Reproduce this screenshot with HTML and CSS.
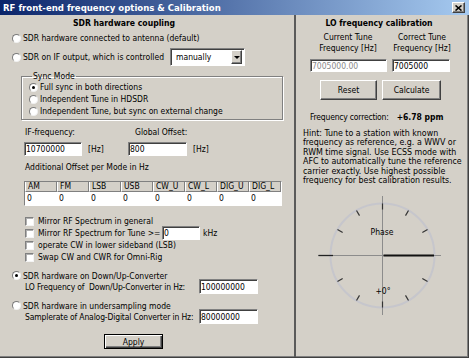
FILE: index.html
```html
<!DOCTYPE html>
<html lang="en">
<head>
  <meta charset="UTF-8">
  <meta name="viewport" content="width=device-width, initial-scale=1.0">
  <title>RF front-end frequency options &amp; Calibration</title>
  <link rel="stylesheet" href="styles.css">
</head>
<body>
  <div class="window">
    <div class="titlebar">
      <span class="caption">RF front-end frequency options &amp; Calibration</span>
      <span class="close-btn">
        <svg width="7" height="6" viewBox="0 0 7 6"><path d="M0.5 0.5 L6.5 5.5 M6.5 0.5 L0.5 5.5" stroke="#000" stroke-width="1.6"/></svg>
      </span>
    </div>

    <div class="panes">
      <div class="left">
        <div class="heading">SDR hardware coupling</div>

        <div class="row opt first"><span class="radio"></span>SDR hardware connected to antenna (default)</div>
        <div class="row opt combo-row">
          <span class="radio"></span>
          <span class="combo-label">SDR on IF output, which is controlled</span>
          <span class="combo"><span class="combo-text">manually</span><span class="combo-btn"></span></span>
        </div>

        <fieldset class="group">
          <legend>Sync Mode</legend>
          <div class="row"><span class="radio checked"></span>Full sync in both directions</div>
          <div class="row"><span class="radio"></span>Independent Tune in HDSDR</div>
          <div class="row"><span class="radio"></span>Independent Tune, but sync on external change</div>
        </fieldset>

        <div class="row if-labels">
          <span class="if-col">IF-frequency:</span>
          <span>Global Offset:</span>
        </div>
        <div class="row if-inputs">
          <span class="if-group"><input class="field w58" type="text" value="10700000"><span class="unit">[Hz]</span></span>
          <span class="if-group"><input class="field w59" type="text" value="800"><span class="unit">[Hz]</span></span>
        </div>

        <div class="row note">Additional Offset per Mode in Hz</div>

        <div class="modes">
          <div class="hd">AM</div><div class="hd">FM</div><div class="hd">LSB</div><div class="hd">USB</div>
          <div class="hd">CW_U</div><div class="hd">CW_L</div><div class="hd">DIG_U</div><div class="hd">DIG_L</div>
          <div class="val">0</div><div class="val">0</div><div class="val">0</div><div class="val">0</div>
          <div class="val">0</div><div class="val">0</div><div class="val">0</div><div class="val">0</div>
        </div>

        <div class="checks">
          <div class="row"><span class="check"></span>Mirror RF Spectrum in general</div>
          <div class="row"><span class="check"></span><span class="tune-label">Mirror RF Spectrum for Tune &gt;=</span><input class="field tune" type="text" value="0"><span class="khz">kHz</span></div>
          <div class="row"><span class="check"></span>operate CW in lower sideband (LSB)</div>
          <div class="row"><span class="check"></span>Swap CW and CWR for Omni-Rig</div>
        </div>

        <div class="row opt conv"><span class="radio checked"></span>SDR hardware on Down/Up-Converter</div>
        <div class="row sub-field"><span class="sub-label">LO Frequency of &nbsp;Down/Up-Converter in Hz:</span><input class="field w59 tall" type="text" value="100000000"></div>

        <div class="row opt under"><span class="radio"></span>SDR hardware in undersampling mode</div>
        <div class="row sub-field"><span class="sub-label">Samplerate of Analog-Digital Converter in Hz:</span><input class="field w59 tall" type="text" value="80000000"></div>

        <button class="btn default apply">Apply</button>
      </div>

      <div class="right">
        <div class="heading">LO frequency calibration</div>

        <div class="cal-grid">
          <div class="cal-label">Current Tune<br>Frequency [Hz]</div>
          <div class="cal-label">Correct Tune<br>Frequency [Hz]</div>
          <div class="cal-input"><input class="field current" type="text" value="7005000.00" readonly></div>
          <div class="cal-input"><input class="field correct" type="text" value="7005000"></div>
        </div>

        <div class="cal-buttons">
          <button class="btn reset">Reset</button>
          <button class="btn calc">Calculate</button>
        </div>

        <div class="row correction">Frequency correction:<b>+6.78 ppm</b></div>

        <p class="hint">Hint: Tune to a station with known<br>frequency as reference, e.g. a WWV or<br>RWM time signal. Use ECSS mode with<br>AFC to automatically tune the reference<br>carrier exactly. Use highest possible<br>frequency for best calibration results.</p>

        <svg class="dial" width="130" height="125" viewBox="0 0 130 125">
          <circle cx="65.5" cy="60.5" r="52" fill="none" stroke="#c6c6cc" stroke-width="2"/>
          <line x1="65.5" y1="1" x2="65.5" y2="120" stroke="#8c8c8c"/>
          <line x1="1" y1="60.5" x2="124" y2="60.5" stroke="#8c8c8c"/>
          <line x1="1.5" y1="60.5" x2="16" y2="60.5" stroke="#222" stroke-width="1.3"/>
          <line x1="66.5" y1="60.5" x2="117" y2="60.5" stroke="#111" stroke-width="2"/>
          <g stroke="#333" stroke-width="1.2">
            <line x1="65.5" y1="14.5" x2="65.5" y2="8.5"/>
            <line x1="88.5" y1="20.66" x2="91.5" y2="15.47"/>
            <line x1="42.5" y1="20.66" x2="39.5" y2="15.47"/>
            <line x1="105.34" y1="37.5" x2="110.53" y2="34.5"/>
            <line x1="25.66" y1="37.5" x2="20.47" y2="34.5"/>
            <line x1="105.34" y1="83.5" x2="110.53" y2="86.5"/>
            <line x1="25.66" y1="83.5" x2="20.47" y2="86.5"/>
            <line x1="88.5" y1="100.34" x2="91.5" y2="105.53"/>
            <line x1="42.5" y1="100.34" x2="39.5" y2="105.53"/>
            <line x1="65.5" y1="106.5" x2="65.5" y2="112.5"/>
          </g>
          <text x="65" y="40" text-anchor="middle">Phase</text>
          <text x="66" y="99" text-anchor="middle">+0°</text>
        </svg>
      </div>
    </div>
  </div>
</body>
</html>
```

FILE: styles.css
```css
* {
  box-sizing: border-box;
}
body {
  margin: 0;
  background: #d4d0c8;
  font-family: "DejaVu Sans Condensed", "Liberation Sans", sans-serif;
  font-size: 8.5px;
  color: #000;
}
input, button {
  font: inherit;
  color: inherit;
  margin: 0;
}

.window {
  width: 469px;
  height: 358px;
  display: flex;
  flex-direction: column;
  background: #d4d0c8;
}
.titlebar {
  flex: none;
  height: 15px;
  display: flex;
  align-items: center;
  padding: 0 4px 0 3px;
  background: linear-gradient(to right, #0a246a, #a6caf0);
  color: #fff;
  font-weight: bold;
  font-size: 9.5px;
}
.caption {
  flex: 1;
}
.close-btn {
  width: 13px;
  height: 11px;
  display: flex;
  align-items: center;
  justify-content: center;
  background: #d4d0c8;
  border: 1px solid;
  border-color: #fff #404040 #404040 #fff;
  box-shadow: inset -1px -1px 0 #808080;
}

.panes {
  flex: 1;
  display: flex;
  border-right: 1px solid #404040;
  border-bottom: 1px solid #404040;
  box-shadow: inset -1px -1px 0 #808080;
}
.left {
  width: 296px;
  flex: none;
  padding-top: 2px;
  border-right: 2px solid #5a5a5a;
}
.right {
  flex: 1;
  padding-top: 2px;
}

.heading {
  height: 12px;
  line-height: 12px;
  font-size: 8.6px;
  font-weight: bold;
  text-align: center;
}
.left .heading {
  padding-right: 46px;
}
.right .heading {
  padding-right: 6px;
}

.row {
  display: flex;
  align-items: center;
  height: 12px;
  white-space: nowrap;
}
.opt {
  padding-left: 12px;
}
.opt.first {
  margin-top: 3px;
}
.combo-row {
  margin-top: 3px;
  height: 20px;
}
.combo-label {
  width: 147px;
}

/* classic controls */
.radio {
  flex: none;
  width: 9px;
  height: 9px;
  margin-right: 2px;
  border-radius: 50%;
  background: #fff;
  border: 1px solid;
  border-color: #7a7a7a #f0f0f0 #f0f0f0 #7a7a7a;
  display: flex;
  align-items: center;
  justify-content: center;
}
.radio.checked::after {
  content: "";
  width: 3px;
  height: 3px;
  border-radius: 50%;
  background: #000;
}
.check {
  flex: none;
  width: 9px;
  height: 9px;
  margin-right: 4px;
  background: #fff;
  border: 1px solid;
  border-color: #808080 #f4f4f4 #f4f4f4 #808080;
  box-shadow: inset 1px 1px 0 #b0b0b0;
}
.field {
  height: 14px;
  padding: 0 0 0 1px;
  background: #fff;
  border: 1px solid;
  border-color: #808080 #fff #fff #808080;
  box-shadow: inset 1px 1px 0 #404040;
  outline: none;
}
.field.tall {
  height: 15px;
}
.w58 {
  width: 58px;
}
.w59 {
  width: 59px;
}
.btn {
  padding: 0;
  background: #d4d0c8;
  border: 1px solid;
  border-color: #fff #404040 #404040 #fff;
  box-shadow: inset -1px -1px 0 #808080;
}
.btn.default {
  border-color: #000;
  box-shadow: inset 1px 1px 0 #fff, inset -1px -1px 0 #404040, inset -2px -2px 0 #808080;
}

.combo {
  width: 75px;
  height: 18px;
  display: flex;
  align-items: center;
  padding: 0 2px 0 5px;
  background: #fff;
  border: 1px solid;
  border-color: #808080 #fff #fff #808080;
  box-shadow: inset 1px 1px 0 #404040;
}
.combo-text {
  flex: 1;
}
.combo-btn {
  width: 11px;
  height: 14px;
  display: flex;
  align-items: center;
  justify-content: center;
  background: #d4d0c8;
  border: 1px solid;
  border-color: #fff #404040 #404040 #fff;
  box-shadow: inset -1px -1px 0 #808080;
}
.combo-btn::after {
  content: "";
  border-left: 3px solid transparent;
  border-right: 3px solid transparent;
  border-top: 3px solid #000;
}

/* sync mode group */
.group {
  margin: 4px 0 0 21px;
  width: 262px;
  padding: 0 0 2px 7px;
  border: 1px solid #808080;
  box-shadow: inset 1px 1px 0 #fff, 1px 1px 0 #fff;
}
.group legend {
  padding: 0 1px;
  margin-left: 3px;
  line-height: 10px;
}

.if-labels {
  margin-top: 6px;
  padding-left: 25px;
}
.if-col {
  width: 110px;
}
.if-inputs {
  margin-top: 4px;
  height: 14px;
  padding-left: 24px;
}
.if-group {
  display: flex;
  align-items: center;
  width: 104px;
}
.unit {
  margin-left: 6px;
}
.note {
  margin-top: 5px;
  padding-left: 25px;
}

.modes {
  margin: 8px 0 0 24px;
  width: 258px;
  display: grid;
  grid-template-columns: repeat(8, 1fr);
  border: 1px solid;
  border-color: #808080 #fff #fff #808080;
}
.modes .hd {
  height: 10px;
  line-height: 9px;
  padding-left: 2px;
  background: #d4d0c8;
  border-left: 1px solid #fff;
  border-right: 1px solid #808080;
  border-bottom: 1px solid #808080;
}
.modes .val {
  height: 13px;
  line-height: 13px;
  padding-left: 2px;
  background: #fff;
}

.checks {
  margin-top: 9px;
  padding-left: 25px;
}
.tune-label {
  width: 124px;
}
.field.tune {
  width: 38px;
}
.khz {
  margin-left: 3px;
}

.conv {
  margin-top: 7px;
  height: 11px;
}
.under {
  margin-top: 8px;
  height: 11px;
}
.sub-field {
  height: 11px;
  padding-left: 25px;
}
.sub-label {
  width: 174px;
  letter-spacing: -0.15px;
}
.apply {
  display: block;
  width: 59px;
  height: 15px;
  margin: 12px 0 0 104px;
}

/* calibration side */
.cal-grid {
  margin-top: 3px;
  padding-left: 10px;
  display: grid;
  grid-template-columns: 84px 60px;
  column-gap: 2px;
}
.cal-label {
  text-align: center;
  line-height: 11px;
}
.cal-input {
  margin-top: 5px;
  height: 13px;
}
.cal-input .field {
  height: 13px;
}
.field.current {
  width: 77px;
  margin-left: 4px;
  color: #8a8a8a;
}
.field.correct {
  width: 58px;
}
.cal-buttons {
  display: flex;
  gap: 5px;
  margin-top: 8px;
  padding-left: 24px;
}
.cal-buttons .btn {
  height: 20px;
}
.reset {
  width: 57px;
}
.calc {
  width: 59px;
}
.correction {
  margin-top: 11px;
  padding-left: 14px;
  letter-spacing: -0.2px;
}
.correction b {
  margin-left: 8px;
  letter-spacing: 0;
}
.hint {
  margin: 6px 0 0;
  padding-left: 7px;
  font-size: 8.8px;
  line-height: 9.4px;
  white-space: nowrap;
}
.dial {
  display: block;
  margin: 10px 0 0 21px;
}
.dial text {
  font-size: 8.5px;
  fill: #000;
}
```
